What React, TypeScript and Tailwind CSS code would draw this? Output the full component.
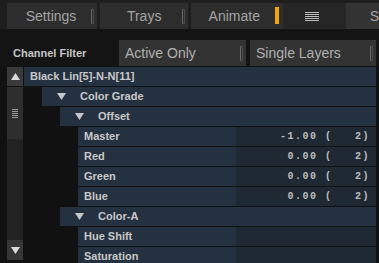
import React from "react";

const Tri = ({ up = false, cls = "fill-[#c8c8c8]" }: { up?: boolean; cls?: string }) => (
  <svg width="9" height="7" viewBox="0 0 9 7" className={cls}>
    {up ? <polygon points="4.5,0 9,7 0,7" /> : <polygon points="0,0 9,0 4.5,7" />}
  </svg>
);

const Bracket = () => (
  <div className="absolute right-[3px] top-[6px] h-[15px] w-[3px] border border-[#4a4a4a] border-l-[#6a6a6a]" />
);

type Row = { label: string; level: number; group?: boolean; value?: string; leaf?: boolean };

const rows: Row[] = [
  { label: "Black Lin[5]-N-N[11]", level: 0 },
  { label: "Color Grade", level: 1, group: true },
  { label: "Offset", level: 2, group: true },
  { label: "Master", level: 3, leaf: true, value: "-1.00 (   2)" },
  { label: "Red", level: 3, leaf: true, value: "0.00 (   2)" },
  { label: "Green", level: 3, leaf: true, value: "0.00 (   2)" },
  { label: "Blue", level: 3, leaf: true, value: "0.00 (   2)" },
  { label: "Color-A", level: 2, group: true },
  { label: "Hue Shift", level: 3, leaf: true, value: "" },
  { label: "Saturation", level: 3, leaf: true, value: "" },
];

const indent: Record<number, string> = {
  0: "ml-0",
  1: "ml-[18px]",
  2: "ml-[36px]",
  3: "ml-[54px]",
};

export default function App() {
  return (
    <div
      className="w-[379px] h-[263px] overflow-hidden bg-[#111111] relative"
      style={{ fontFamily: '"Liberation Sans", Arial, sans-serif' }}
    >
      {/* Top tab bar */}
      <div className="h-[29px] bg-[#1e1e1e] pt-[3px] flex">
        <div className="ml-[7px] w-[91px] h-[26px] bg-[#2d2d2d] relative flex items-center justify-center text-[14px] text-[#a3a3a3]">
          <span className="-ml-[2px]">Settings</span>
          <Bracket />
        </div>
        <div className="ml-[3px] w-[89px] h-[26px] bg-[#2d2d2d] relative flex items-center justify-center text-[14px] text-[#a3a3a3]">
          <span>Trays</span>
          <Bracket />
        </div>
        <div className="ml-[3px] w-[93px] h-[26px] bg-[#2d2d2d] relative flex items-center justify-center text-[14px] text-[#a3a3a3]">
          <span className="-ml-[6px]">Animate</span>
          <div className="absolute right-[4px] top-[4px] h-[17px] w-[4px] bg-[#f0a800]" />
        </div>
        <div className="w-[63px] h-[26px] bg-[#262626] flex items-center justify-center">
          <div className="flex flex-col gap-[1px] -ml-[5px]">
            <div className="h-[1px] w-[14px] bg-[#bdbdbd]" />
            <div className="h-[1px] w-[14px] bg-[#bdbdbd]" />
            <div className="h-[1px] w-[14px] bg-[#bdbdbd]" />
            <div className="h-[1px] w-[14px] bg-[#bdbdbd]" />
            <div className="h-[1px] w-[14px] bg-[#bdbdbd]" />
          </div>
        </div>
        <div className="flex-1 h-[26px] bg-[#333333] flex items-center text-[14px] text-[#a3a3a3] pl-[24px]">
          S
        </div>
      </div>

      {/* Filter row */}
      <div className="h-[37px] bg-[#141414] flex items-end">
        <div className="w-[119px] h-[26px] flex items-center pl-[13px] text-[11px] font-bold text-[#c4c4c4]">
          Channel Filter
        </div>
        <div className="w-[127px] h-[26px] bg-[#333333] relative flex items-center pl-[6px] text-[14px] text-[#b0b0b0]">
          Active Only
          <Bracket />
        </div>
        <div className="ml-[4px] w-[126px] h-[26px] bg-[#333333] relative flex items-center pl-[6px] text-[14px] text-[#b0b0b0]">
          Single Layers
          <Bracket />
        </div>
      </div>

      {/* Tree */}
      <div className="flex pt-[1px] pl-[7px]">
        {/* scrollbar */}
        <div className="w-[16px] flex flex-col h-[193px]">
          <div className="h-[19px] bg-[#3a3a3a] flex items-center justify-center">
            <Tri up cls="fill-[#dcdcdc]" />
          </div>
          <div className="h-[52px] mt-[1px] bg-[#2e2e2e] flex items-center justify-center">
            <div className="flex flex-col gap-[1px]">
              <div className="h-[1px] w-[6px] bg-[#9a9a9a]" />
              <div className="h-[1px] w-[6px] bg-[#9a9a9a]" />
              <div className="h-[1px] w-[6px] bg-[#9a9a9a]" />
              <div className="h-[1px] w-[6px] bg-[#9a9a9a]" />
              <div className="h-[1px] w-[6px] bg-[#9a9a9a]" />
            </div>
          </div>
          <div className="flex-1 bg-[#222222]" />
          <div className="h-[20px] bg-[#363636] flex items-center justify-center">
            <Tri cls="fill-[#dcdcdc]" />
          </div>
        </div>
        <div className="ml-[1px] w-[352px] flex flex-col">
          {rows.map((r, i) => (
            <div
              key={i}
              className={`${indent[r.level]} h-[19px] mb-[1px] bg-[#243140] flex items-center text-[11px] font-bold text-[#c8c8c8]`}
            >
              {r.group ? (
                <>
                  <span className="ml-[15px] flex items-center">
                    <Tri />
                  </span>
                  <span className="ml-[14px]">{r.label}</span>
                </>
              ) : r.leaf ? (
                <>
                  <span className="ml-[6px] w-[152px]">{r.label}</span>
                  <div className="flex-1 h-full bg-[#1f2933] flex items-center justify-end pr-[6px]">
                    <span
                      className="whitespace-pre text-[10px] font-bold text-[#bdbdbd] tracking-[1.5px]"
                      style={{ fontFamily: '"Liberation Mono", "Courier New", monospace' }}
                    >
                      {r.value}
                    </span>
                  </div>
                </>
              ) : (
                <span className="ml-[6px]">{r.label}</span>
              )}
            </div>
          ))}
        </div>
      </div>
    </div>
  );
}
